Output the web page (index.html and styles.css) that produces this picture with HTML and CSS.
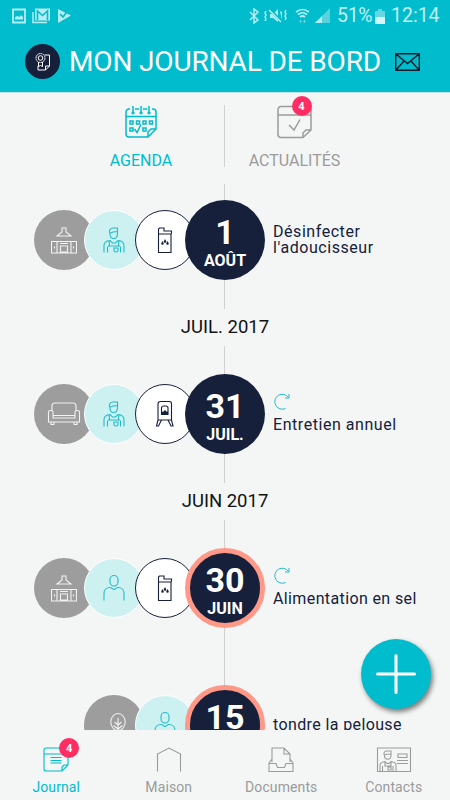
FILE: index.html
```html
<!DOCTYPE html>
<html lang="fr">
<head>
    <meta charset="UTF-8">
    <meta name="viewport" content="width=device-width, initial-scale=1.0">
    <title>Mon journal de bord</title>
    <link rel="stylesheet" href="styles.css">
</head>
<body>
    <!-- Shared icons -->
    <svg class="sprite" width="0" height="0">
        <symbol id="kitchen" viewBox="0 0 26 28">
            <path d="M11 2h4v4l5 4H6l5-4zM.5 15.500h25v11.500H.5zM6 15.500V27M20 15.500V27M9.500 20h7v6h-7zM9 17.500h8M3.500 20.500v2M22.500 20.500v2"/>
        </symbol>
        <symbol id="worker" viewBox="0 0 26 28">
            <path d="M8.500 7C8 4 9.500 2 12 2h4.500v5M8.300 7.500c3-1.800 5-2 8.200-2M9 8c0 3 1.500 4.500 3.700 4.500S16.500 10.500 16.500 7"/>
            <path d="M3 26.500v-7c0-3 1.500-4.500 6-5l2.500 2.500h3l2.500-2.500c4.500.5 6 2 6 5v7M6.500 26.500v-6M19.500 26.500v-6M8 14.500l.5 5M18 14.500l-.5 5M7 20h12M13 22h4v2.500c0 1-1 1.500-2 1.500s-2-.5-2-1.500z"/>
        </symbol>
        <symbol id="person" viewBox="0 0 26 28">
            <rect x="9" y="1.500" width="8" height="10.500" rx="4"/>
            <path d="M3 26.500v-7c0-3.500 2.500-6 6-6 2 0 2.500 2 4 2s2-2 4-2c3.500 0 6 2.500 6 6v7"/>
        </symbol>
        <symbol id="softener" viewBox="0 0 26 28">
            <path d="M6.500 8h12.500V26.500H6.500zM6.500 8V3l1-1h4.500v3h7.500v2L19 8"/>
            <path class="fill" d="M13 13l1.300 2.500a1.300 1.300 0 1 1-2.600 0zM10.500 15l1.300 2.500a1.300 1.300 0 1 1-2.600 0zM15.500 15l1.300 2.500a1.300 1.300 0 1 1-2.600 0z"/>
        </symbol>
        <symbol id="stove" viewBox="0 0 26 28">
            <path d="M6 20V4c0-1.500 1-2.500 2.500-2.500h9c1.500 0 2 1 2 2.500v16zM6 20l-1.500 6h2l3-6M19.500 20l1.500 6h-2l-3-6"/>
            <path d="M9.500 14.500V8c0-1.500 1-2 2.500-2h2c1.500 0 2 .5 2 2v6.500z"/>
            <path class="fill" d="M9.500 14v-3l1.500 1 2-2 2 2 1-1v3z"/>
        </symbol>
        <symbol id="sofa" viewBox="0 0 34 28">
            <path d="M5 10V6c0-2 1-3 3-3h18c2 0 3 1 3 3v4M6 18v-6c0-2-4.500-2-4.500 0v10h31V12c0-2-4.500-2-4.500 0v6zM6 15.500h22M4 22v2.500h3V22M27 22v2.500h3V22M5 10v1M29 10v1"/>
        </symbol>
        <symbol id="tree" viewBox="0 0 26 28">
            <ellipse cx="13" cy="11" rx="7.200" ry="8.500"/>
            <path d="M13 28V7M13 14l3.500-3M13 14l-3.500-3M13 18l4.500-3.500M13 18l-4.500-3.500"/>
        </symbol>
        <symbol id="repeat" viewBox="0 0 18 18">
            <path d="M12.500 15.500A7.500 7.500 0 1 1 15.500 4.500M16 1v4h-4"/>
        </symbol>
    </svg>

    <header>
        <div class="status-bar">
            <svg class="notifications" width="60" height="16" viewBox="0 0 60 16">
                <path d="M1 1.500h12v13H1z" fill="none" stroke="#b5edf2" stroke-width="1.800"/>
                <path d="M3 11.500V9l2.500-1 2 1L9 7l2 2v2.500z" fill="#b5edf2"/>
                <path d="M21 4v10.500h14" fill="none" stroke="#b5edf2" stroke-width="1.500"/>
                <path d="M23 .5h15v12H23z" fill="#b5edf2"/>
                <path d="M25.500 12V3l5 4.500 5-4.500v9" fill="none" stroke="#00bccd" stroke-width="1.600"/>
                <path d="M46 1l13 6.500L46 15z" fill="#b5edf2"/>
                <path d="M48 6l3 3 4.500-6" fill="none" stroke="#00bccd" stroke-width="1.700"/>
            </svg>
            <div class="system">
                <svg width="84" height="18" viewBox="0 0 84 18">
                    <path d="M1 5l8 8-4 3V2l4 3-8 8" fill="none" stroke="#b5edf2" stroke-width="1.500"/>
                    <path d="M21 7h3l5-5v13l-5-4h-3zM31 4l2 1v8" fill="#b5edf2"/>
                    <path d="M20 2l13 13" stroke="#00bccd" stroke-width="3"/>
                    <path d="M20 3l12 12M17 4l-1 2 1 2-1 2 1 2-1 2M37 3l-1 2 1 2-1 2 1 2-1 2" fill="none" stroke="#b5edf2" stroke-width="1.500"/>
                    <path d="M47 5q6.500-5 13 0M49 7.500q4.500-3.500 9 0M51 10q2.500-2 5 0" fill="none" stroke="#b5edf2" stroke-width="1.700"/>
                    <path d="M51.500 16v-3M50 14.500l1.500-1.500 1.500 1.500M55.500 12.500v3M54 14l1.500 1.500L57 14" fill="none" stroke="#5fd5df"/>
                    <path d="M66 16L81 1v15z" fill="#59d2dd"/>
                    <path d="M66 16l7-7v7z" fill="#b5edf2"/>
                </svg>
                <span class="percent">51%</span>
                <svg class="battery" width="10" height="15" viewBox="0 0 10 15">
                    <path d="M0 2h3V0h4v2h3v13H0z" fill="#67d6e0"/>
                    <path d="M0 8h10v7H0z" fill="#d5f5f7"/>
                </svg>
                <span class="time">12:14</span>
            </div>
        </div>
        <div class="title-bar">
            <div class="logo">
                <svg width="18" height="20" viewBox="0 0 18 20">
                    <path d="M10.500 3h5v11l-4 4H4v-4M15.500 14h-4v4"/>
                    <circle cx="6.500" cy="6" r="4.500" stroke-dasharray="1.800 .5"/>
                    <circle cx="6.500" cy="6" r="2.300"/>
                    <path d="M4.500 10v4.500l2-1 2 1V10"/>
                </svg>
            </div>
            <h1>MON JOURNAL DE BORD</h1>
            <svg class="mail" width="25" height="18" viewBox="0 0 25 18">
                <path d="M.7.7h23.600v16.600H.7zM1 1l11.500 9.500L24 1M1 17l8-9M24 17l-8-9"/>
            </svg>
        </div>
    </header>

    <main>
        <div class="tabs">
            <div class="tab active">
                <div class="tab-icon">
                    <svg width="32" height="34" viewBox="0 0 32 34">
                        <path d="M5 4H4a3 3 0 0 0-3 3v22a3 3 0 0 0 3 3h19l8-8V7a3 3 0 0 0-3-3h-1M1 11.500h30M8 1v6M16 1v6M24 1v6M10 4h4M18 4h4M23 32v-5l3-3h5"/>
                        <path d="M7.300 7.500h1.400v1H7.300zM15.300 7.500h1.400v1h-1.400zM23.300 7.500h1.400v1h-1.400z"/>
                        <path d="M5 16h3v3H5zM11.500 16h3v3h-3zM18 16h3v3h-3zM24.500 16h3v3h-3zM5 23h3v3H5zM18 23h3v3h-3zM9.500 24l2.500 3.500 4-8"/>
                    </svg>
                </div>
                <span class="tab-label">AGENDA</span>
            </div>
            <div class="tab">
                <div class="tab-icon">
                    <svg width="36" height="34" viewBox="0 0 36 34">
                        <path d="M4 1.500h27a3 3 0 0 1 3 3V25l-8 7.500H4a3 3 0 0 1-3-3v-25a3 3 0 0 1 3-3zM1 10h33M26 32.500V28l3-3h5M12 20l5 5 6-10.500"/>
                    </svg>
                    <span class="badge">4</span>
                </div>
                <span class="tab-label">ACTUALITÉS</span>
            </div>
        </div>

        <div class="timeline">
            <div class="entry first">
                <div class="bubbles">
                    <div class="bubble room"><svg width="26" height="28"><use href="#kitchen"/></svg></div>
                    <div class="bubble who"><svg width="26" height="28"><use href="#worker"/></svg></div>
                    <div class="bubble device"><svg width="26" height="28"><use href="#softener"/></svg></div>
                    <div class="date"><b>1</b><span>AOÛT</span></div>
                </div>
                <div class="task">Désinfecter<br>l'adoucisseur</div>
            </div>

            <h2>JUIL. 2017</h2>

            <div class="entry">
                <div class="bubbles">
                    <div class="bubble room"><svg width="34" height="28"><use href="#sofa"/></svg></div>
                    <div class="bubble who"><svg width="26" height="28"><use href="#worker"/></svg></div>
                    <div class="bubble device"><svg width="26" height="28"><use href="#stove"/></svg></div>
                    <div class="date"><b>31</b><span>JUIL.</span></div>
                </div>
                <div class="task">
                    <svg class="repeat" width="18" height="18"><use href="#repeat"/></svg>
                    Entretien annuel
                </div>
            </div>

            <h2>JUIN 2017</h2>

            <div class="entry">
                <div class="bubbles">
                    <div class="bubble room"><svg width="26" height="28"><use href="#kitchen"/></svg></div>
                    <div class="bubble who"><svg width="26" height="28"><use href="#person"/></svg></div>
                    <div class="bubble device"><svg width="26" height="28"><use href="#softener"/></svg></div>
                    <div class="date late"><b>30</b><span>JUIN</span></div>
                </div>
                <div class="task tight">
                    <svg class="repeat" width="18" height="18"><use href="#repeat"/></svg>
                    Alimentation en sel
                </div>
            </div>

            <div class="entry">
                <div class="bubbles">
                    <div class="bubble room tree"><svg width="26" height="28"><use href="#tree"/></svg></div>
                    <div class="bubble who"><svg width="26" height="28"><use href="#person"/></svg></div>
                    <div class="date late"><b>15</b></div>
                </div>
                <div class="task tight">tondre la pelouse</div>
            </div>
        </div>
    </main>

    <div class="add">
        <svg width="42" height="42" viewBox="0 0 42 42"><path d="M21 2.500v37M2.500 21h37"/></svg>
    </div>

    <nav>
        <div class="nav-item active">
            <div class="nav-icon">
                <svg width="26" height="26" viewBox="0 0 26 26">
                    <path d="M3 1h20a2 2 0 0 1 2 2v15l-6 6H3a2 2 0 0 1-2-2V3a2 2 0 0 1 2-2zM1 7h24M19 24v-4l2-2h4M7.500 10.500h11M7.500 13.500h11M7.500 16h11"/>
                </svg>
                <span class="badge">4</span>
            </div>
            <span class="nav-label">Journal</span>
        </div>
        <div class="nav-item">
            <div class="nav-icon">
                <svg width="26" height="26" viewBox="0 0 26 26">
                    <path d="M1.500 24.500V7L13 1l11.500 6v17.500"/>
                </svg>
            </div>
            <span class="nav-label">Maison</span>
        </div>
        <div class="nav-item">
            <div class="nav-icon">
                <svg width="26" height="26" viewBox="0 0 26 26">
                    <path d="M4 15V1h12l6 6v8M16 1v6h6M4 12l-3 4v8.500h24V16l-3-4M1 16.500h7l1.500 4h7l1.500-4h7"/>
                </svg>
            </div>
            <span class="nav-label">Documents</span>
        </div>
        <div class="nav-item">
            <div class="nav-icon">
                <svg width="34" height="26" viewBox="0 0 34 26">
                    <path d="M.5 1h33v23.500H.5zM21 7h9v3.500h-9zM20 13.500h11M20 16.500h11"/>
                    <path d="M7 7.500c-.5-2 1-3.500 3-3.500h4v3M7 8c2-1 4-1 7-1v1.500c0 5-6.500 5-6.500 0M3 24v-6c0-2 2-3 5-3.500l2 2h2l2-2c3 .5 5 1.500 5 3.500v6M5.500 24v-5M16 24v-5M8 15v4h6v-4M11 20h3v3h-3z"/>
                </svg>
            </div>
            <span class="nav-label">Contacts</span>
        </div>
    </nav>
</body>
</html>
```

FILE: styles.css
```css
* {
    box-sizing: border-box;
}
body {
    margin: 0;
    width: 450px;
    height: 800px;
    display: flex;
    flex-direction: column;
    overflow: hidden;
    position: relative;
    background-color: #f3f6f5;
    font-family: Roboto, "Liberation Sans", sans-serif;
    color: #16203a;
}
svg {
    display: block;
    flex-shrink: 0;
    overflow: visible;
}
.sprite {
    position: absolute;
}

/* Header */
header {
    height: 92px;
    flex-shrink: 0;
    background: #00bccd;
}
.status-bar {
    height: 32px;
    display: flex;
    align-items: center;
    justify-content: space-between;
    padding: 0 12px;
}
.system {
    display: flex;
    align-items: center;
    color: #c0eff3;
    font-size: 19.5px;
    line-height: 32px;
}
.percent {
    width: 37px;
    margin-left: 4px;
    letter-spacing: -0.3px;
}
.battery {
    margin-left: 1px;
}
.time {
    margin-left: 6px;
    width: 47px;
}
.title-bar {
    height: 59px;
    display: flex;
    align-items: center;
    padding: 0 30px 0 25px;
}
.logo {
    width: 35px;
    height: 35px;
    border-radius: 50%;
    background: #16203a;
    display: flex;
    align-items: center;
    justify-content: center;
}
.logo svg {
    fill: none;
    stroke: #fff;
}
h1 {
    flex: 1;
    margin: 0 0 0 9px;
    color: #fff;
    font-size: 28px;
    font-weight: 400;
    line-height: 40px;
    letter-spacing: -0.15px;
    white-space: nowrap;
}
.mail {
    fill: none;
    stroke: #0b1a28;
    stroke-width: 1.4;
}

/* Tabs */
main {
    height: 638px;
    flex-shrink: 0;
    overflow: hidden;
    border-top: 1px solid #bfe2e6;
}
.tabs {
    height: 91px;
    display: flex;
    padding: 12px 86px 17px 58px;
}
.tab {
    flex: 1;
    display: flex;
    flex-direction: column;
    align-items: center;
    color: #9b9b9b;
}
.tab:first-child {
    flex: 0 0 167px;
    border-right: 1px solid #d3cfcc;
}
.tab.active, .nav-item.active {
    color: #00bccd;
}
.tab-icon, .nav-icon {
    position: relative;
}
.tab-icon svg, .nav-icon svg {
    fill: none;
    stroke: currentColor;
    stroke-width: 1.5;
}
.tab-label {
    margin-top: 12px;
    font-size: 16px;
    line-height: 20px;
}
.badge {
    position: absolute;
    top: -9px;
    right: 1px;
    width: 20px;
    height: 20px;
    border-radius: 50%;
    background: #ff2d62;
    color: #fff;
    font-size: 11px;
    font-weight: 700;
    line-height: 21px;
    text-align: center;
}

/* Timeline */
.entry {
    display: flex;
    padding: 28px 0 29px;
    background: linear-gradient(#d3cfcc, #d3cfcc) 224px 0 / 1px 100% no-repeat;
}
.entry.first {
    padding: 16px 0 29px;
}
.bubbles {
    width: 265px;
    height: 80px;
    display: flex;
    align-items: center;
    justify-content: flex-end;
}
.bubble {
    width: 60px;
    height: 60px;
    margin-right: -9.5px;
    border-radius: 50%;
    display: flex;
    align-items: center;
    justify-content: center;
}
.bubble svg {
    fill: none;
    stroke: currentColor;
    stroke-width: 1.1;
}
.fill {
    fill: currentColor;
    stroke: none;
}
.room {
    background: #9d9d9d;
    color: #f2f2f2;
}
.who {
    background: #cdf1f1;
    border: 1.5px solid #fff;
    color: #1fbccb;
}
.device {
    background: #fff;
    border: 1.5px solid #16203a;
}
.tree {
    padding-left: 8px;
}
.date {
    width: 80px;
    height: 80px;
    border-radius: 50%;
    background: #16203a;
    color: #fff;
    display: flex;
    flex-direction: column;
    align-items: center;
    padding-top: 15px;
    position: relative;
}
.date.late {
    border: 5px solid #ff9887;
    padding-top: 10px;
}
.date b {
    font-size: 34px;
    line-height: 34px;
}
.date span {
    margin-top: 1px;
    font-size: 16px;
    font-weight: 700;
    line-height: 22px;
}
.task {
    height: 80px;
    padding-left: 8px;
    display: flex;
    flex-direction: column;
    justify-content: center;
    font-size: 16px;
    line-height: 16px;
    letter-spacing: 0.55px;
}
.task.tight {
    letter-spacing: 0.38px;
}
.task .repeat {
    fill: none;
    stroke: #22bccb;
    stroke-width: 1;
    margin: -2px 0 6px;
}
h2 {
    height: 37px;
    margin: 0;
    text-align: center;
    color: #111;
    font-size: 18.5px;
    font-weight: 400;
    line-height: 37px;
}

/* Add button */
.add {
    position: absolute;
    left: 361px;
    top: 639px;
    width: 70px;
    height: 70px;
    border-radius: 50%;
    background: #00bccd;
    box-shadow: 2px 3px 5px rgba(0, 0, 0, 0.5);
    display: flex;
    align-items: center;
    justify-content: center;
}
.add path {
    stroke: #fff;
    stroke-width: 3;
    stroke-linecap: round;
}

/* Bottom navigation */
nav {
    height: 70px;
    display: flex;
    padding-top: 17px;
}
.nav-item {
    flex: 1;
    display: flex;
    flex-direction: column;
    align-items: center;
    color: #9b9b9b;
}
.nav-icon svg {
    stroke-width: 1.1;
}
.nav-icon .badge {
    right: -10px;
}
.nav-label {
    margin-top: 5px;
    font-size: 14px;
    line-height: 18px;
    letter-spacing: 0.1px;
}
```
